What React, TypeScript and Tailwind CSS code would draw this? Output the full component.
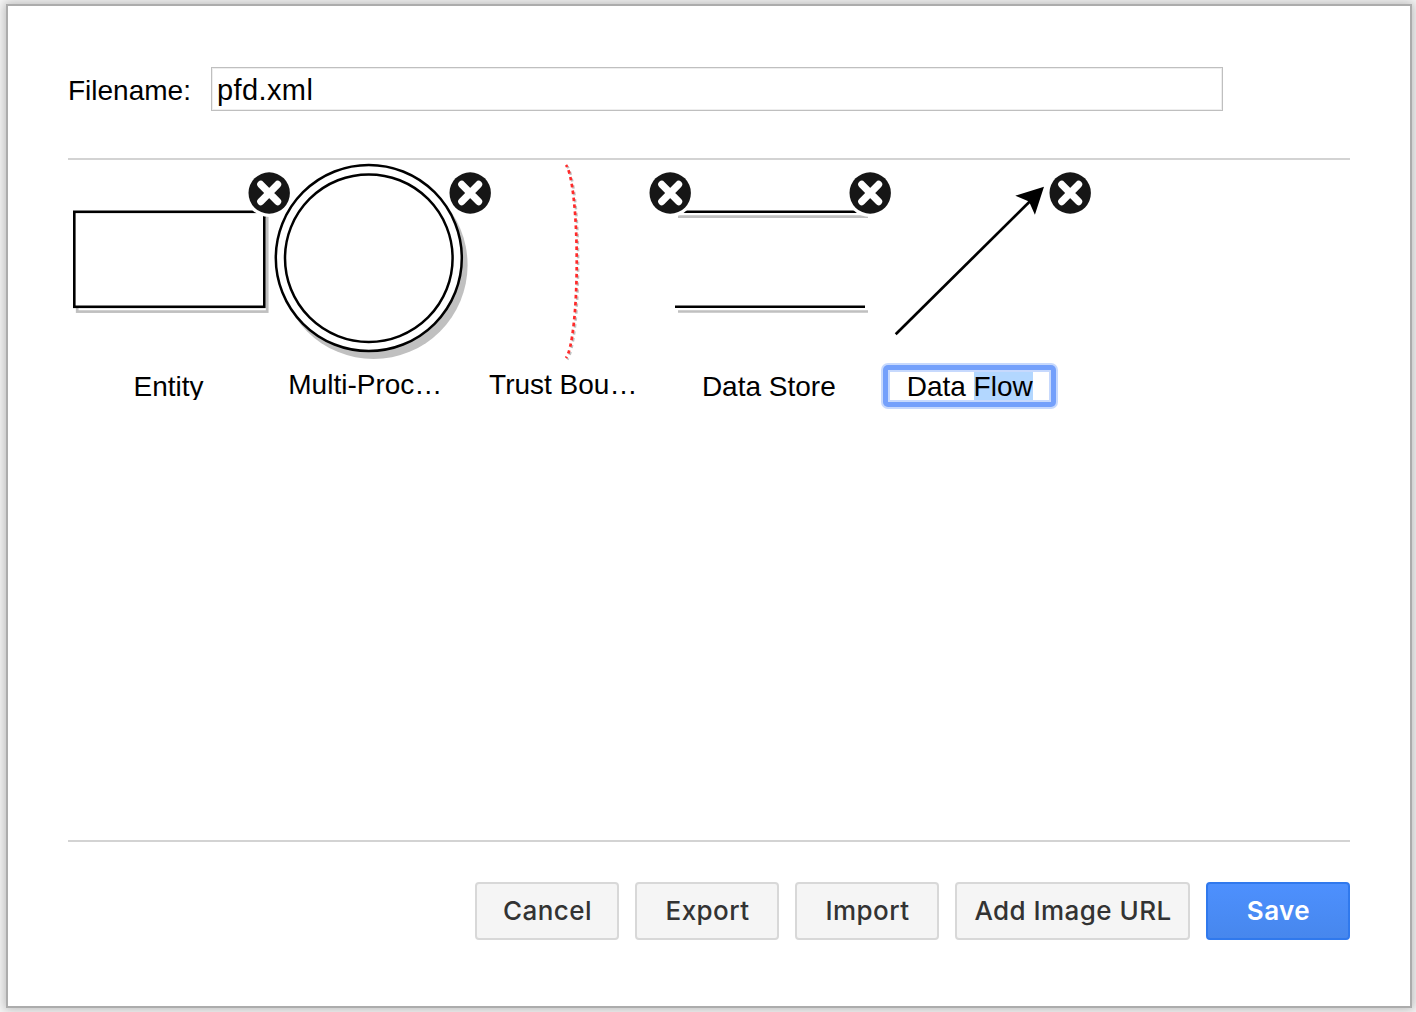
import React from "react";

function CloseIcon() {
  return (
    <svg className="absolute -right-[26px] top-[8px] z-10" width="50" height="50" viewBox="-25.2 -25 50 50">
      <circle r="24" fill="#fff" />
      <circle r="20.7" fill="#161616" />
      <path d="M-8.4 -8.6L8.4 8.6M8.4 -8.6L-8.4 8.6" stroke="#fff" strokeWidth="7.2" strokeLinecap="round" />
    </svg>
  );
}

function Tile({ label, children }: { label: React.ReactNode; children: React.ReactNode }) {
  return (
    <div className="relative w-[200.3px] shrink-0">
      <svg className="block overflow-visible" width="200" height="200" viewBox="0 0 200 200" fill="none">
        {children}
      </svg>
      <CloseIcon />
      {label}
    </div>
  );
}

function Label({ children, className }: { children: React.ReactNode; className: string }) {
  return <div className={`h-[28px] whitespace-nowrap leading-[30px] ${className}`}>{children}</div>;
}

function Button({ children, className }: { children: React.ReactNode; className: string }) {
  return (
    <button
      className={`h-[58px] rounded-[4px] border-2 pl-[1px] font-['Inter',sans-serif] text-[26px] leading-[54px] tracking-[0.45px] ${className}`}
    >
      {children}
    </button>
  );
}

const plain = "border-[#d8d8d8] bg-[#f5f5f5] font-medium text-[#333]";

export default function App() {
  return (
    <div className="h-[1012px] w-[1416px] overflow-hidden bg-[#f7f7f7] pl-[6px] pt-[4px] font-['Liberation_Sans',sans-serif] text-[28px] text-black">
      <div className="flex h-[1004px] w-[1406px] flex-col border-2 border-[#acacac] bg-white px-[60px] pt-[61px] shadow-[0_0_10px_2px_#bdbdbd]">
        <div className="flex h-[44px] items-center">
          <label className="w-[143px] pt-[4px]">Filename:</label>
          <input
            className="h-[44px] w-[1012px] border border-[#bfbfbf] bg-white pl-[5px] pt-[3px] text-[29px] tracking-[0.4px] shadow-[inset_0_0_0_1px_#eeeeee] outline-none"
            defaultValue="pfd.xml"
          />
        </div>

        <div className="mt-[47px] flex h-[684px] w-[1282px] border-y-2 border-[#d3d3d3]">
          <Tile label={<Label className="mt-[12px] overflow-hidden pl-[65.5px]">Entity</Label>}>
            <rect x="9.2" y="56.6" width="190" height="95" stroke="#c0c0c0" strokeWidth="2.7" />
            <rect x="6.3" y="51.8" width="190" height="95" fill="#fff" stroke="#000" strokeWidth="2.6" />
          </Tile>
          <Tile label={<Label className="mt-[10px] pl-[20px]">Multi-Proc…</Label>}>
            <circle cx="105.6" cy="105" r="94" fill="#c0c0c0" />
            <circle cx="100.8" cy="98" r="93" fill="#fff" stroke="#000" strokeWidth="2.5" />
            <circle cx="100.8" cy="98.2" r="83.8" stroke="#000" strokeWidth="2.5" />
          </Tile>
          <Tile label={<Label className="mt-[10px] pl-[20.5px]">Trust Bou…</Label>}>
            <path d="M98.4 6.5A13 98 0 0 1 98.4 199.5" stroke="#c0c0c0" strokeWidth="2.5" strokeDasharray="3.4 3.55" strokeDashoffset="1" />
            <path d="M97 5A13 98 0 0 1 97 198" stroke="#ff2a2a" strokeWidth="2.7" strokeDasharray="3.6 3.35" strokeDashoffset="1" />
          </Tile>
          <Tile label={<Label className="mt-[12px] pl-[33px]">Data Store</Label>}>
            <path d="M9 56.6H199M9 151.5H199" stroke="#c0c0c0" strokeWidth="2.7" />
            <path d="M6 51.8H196M6 146.7H196" stroke="#000" strokeWidth="2.6" />
          </Tile>
          <Tile
            label={
              <div className="ml-[12px] mt-[3px] h-[46px] w-[177px] rounded-[7px] bg-[#c7d9fd] p-[2px]">
                <div className="h-full rounded-[5px] bg-[#74a0fb] p-[5px]">
                  <div className="h-full bg-[#c7d9fd] p-[2px]">
                    <div className="flex h-[28px] justify-center whitespace-pre bg-white leading-[30px]">
                      Data <span className="h-[28px] bg-[#b3d7ff]">Flow</span>
                    </div>
                  </div>
                </div>
              </div>
            }
          >
            <path d="M26.7 174.3L161 41.2" stroke="#000" strokeWidth="2.7" />
            <path d="M175 26.8L165.9 54.8L160 41.5L146.3 35.7Z" fill="#000" />
          </Tile>
        </div>

        <div className="mt-[40px] flex w-[1282px] justify-end gap-[16px]">
          <Button className={`w-[144px] ${plain}`}>Cancel</Button>
          <Button className={`w-[144px] ${plain}`}>Export</Button>
          <Button className={`w-[144px] ${plain}`}>Import</Button>
          <Button className={`w-[235px] ${plain}`}>Add Image URL</Button>
          <Button className="w-[144px] border-[#3079ed] bg-linear-to-b from-[#4d90fe] to-[#4787ed] font-semibold text-white">
            Save
          </Button>
        </div>
      </div>
    </div>
  );
}
